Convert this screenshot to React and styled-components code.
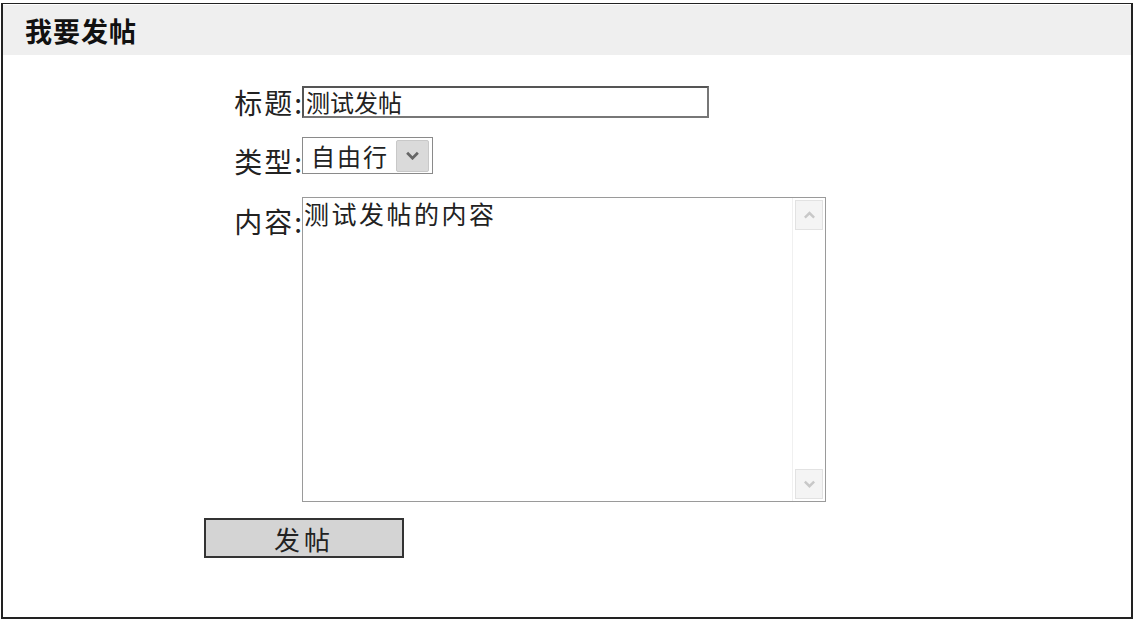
import React from 'react';
import styled, { createGlobalStyle } from 'styled-components';

const Global = createGlobalStyle`
    body {
        margin: 0;
        background: #fff;
        font-family: "Liberation Sans", "Noto Sans CJK SC", sans-serif;
    }
`;

const Panel = styled.div`
    margin: 3px 2px 0 1px;
    height: 613px;
    border: 2px solid #222;
    border-top-width: 1px;
`;

const Header = styled.div`
    height: 50px;
    margin-top: 1px;
    background: #efefef;
    display: flex;
    align-items: center;
    padding-left: 22px;
    font-family: "Noto Sans CJK SC", sans-serif;
    font-weight: 700;
    font-size: 27px;
    letter-spacing: 1px;
    color: #111;
`;

const Form = styled.div`
    display: grid;
    grid-template-columns: 98px auto;
    justify-content: start;
    padding: 31px 0 0 201px;
    font-family: "Noto Sans CJK SC", sans-serif;
    color: #222;
`;

const Label = styled.div`
    text-align: right;
    font-size: 28px;
    line-height: 30px;
    letter-spacing: 2px;
    margin-right: -2px;
    padding-top: ${({ top }) => top || 0}px;
    margin-bottom: ${({ gap }) => gap}px;
    white-space: nowrap;
`;

const TextInput = styled.div`
    width: 401px;
    height: 28px;
    border: 2px solid #555;
    border-right-color: #777;
    border-bottom-color: #777;
    font-size: 24px;
    line-height: 28px;
    padding-left: 2px;
    margin-bottom: 19px;
    white-space: nowrap;
`;

const Select = styled.div`
    width: 131px;
    height: 37px;
    border: 1px solid #8a8a8a;
    display: flex;
    align-items: center;
    justify-content: space-between;
    padding: 0 3px 0 8px;
    box-sizing: border-box;
    margin-bottom: 21px;
    font-size: 24px;
    letter-spacing: 2px;
`;

const ArrowBox = styled.div`
    width: 31px;
    height: 30px;
    background: #dadada;
    border: 1px solid #c8c8c8;
    border-radius: 2px;
    display: flex;
    align-items: center;
    justify-content: center;
`;

const Area = styled.div`
    width: 522px;
    height: 303px;
    border: 1px solid #9a9a9a;
    display: flex;
    margin-bottom: 16px;
`;

const AreaText = styled.div`
    flex: 1;
    font-size: 25px;
    line-height: 26px;
    padding: 2px 0 0 1px;
    letter-spacing: 2.5px;
`;

const Scroll = styled.div`
    width: 32px;
    display: flex;
    flex-direction: column;
    justify-content: space-between;
    border-left: 1px solid #f0f0f0;
`;

const ScrollBtn = styled.div`
    height: 28px;
    margin: 2px 2px;
    background: #f4f4f4;
    border: 1px solid #e2e2e2;
    display: flex;
    align-items: center;
    justify-content: center;
`;

const Submit = styled.div`
    grid-column: 1 / 3;
    width: 196px;
    height: 36px;
    background: #d4d4d4;
    border: 2px solid #333;
    display: flex;
    align-items: center;
    justify-content: center;
    font-size: 26px;
    letter-spacing: 4px;
    color: #222;
`;

const Chevron = ({ up, color, w = 14 }) => (
    <svg width={w} height={w * 0.6} viewBox="0 0 14 8">
        <path
            d={up ? 'M2 7 L7 2 L12 7' : 'M2 1.5 L7 6.5 L12 1.5'}
            fill="none"
            stroke={color}
            strokeWidth="2.6"
        />
    </svg>
);

const App = () => (
    <>
        <Global />
        <Panel>
            <Header>我要发帖</Header>
            <Form>
                <Label top={1} gap={19}>标题:</Label>
                <TextInput>测试发帖</TextInput>

                <Label top={9} gap={21}>类型:</Label>
                <Select>
                    自由行
                    <ArrowBox><Chevron color="#666" w={15} /></ArrowBox>
                </Select>

                <Label top={9} gap={16}>内容:</Label>
                <Area>
                    <AreaText>测试发帖的内容</AreaText>
                    <Scroll>
                        <ScrollBtn><Chevron up color="#c8c8c8" w={13} /></ScrollBtn>
                        <ScrollBtn><Chevron color="#c8c8c8" w={13} /></ScrollBtn>
                    </Scroll>
                </Area>

                <Submit>发帖</Submit>
            </Form>
        </Panel>
    </>
);

export default App;
